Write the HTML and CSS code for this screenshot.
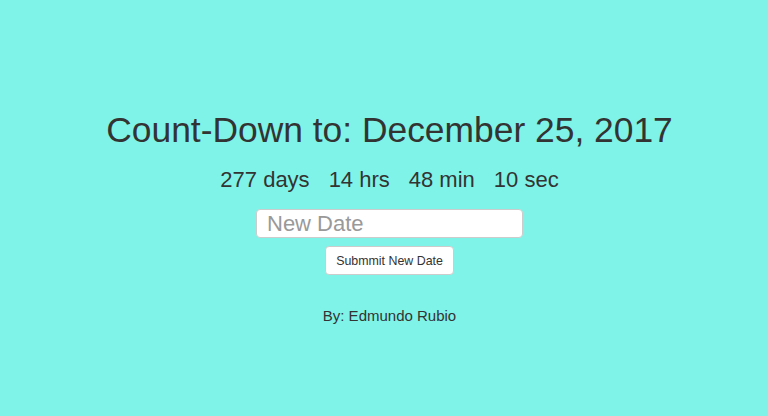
FILE: index.html
```html
<!DOCTYPE html>
<html>
<head>
<meta charset="utf-8">
<link rel="stylesheet" href="styles.css">
</head>
<body>
<main class="page">
  <h1 class="title">Count-Down to: December 25, 2017</h1>
  <div class="timer">
    <span class="unit">277 days</span>
    <span class="unit">14 hrs</span>
    <span class="unit">48 min</span>
    <span class="unit">10 sec</span>
  </div>
  <form class="date-form">
    <input class="date-input" type="text" placeholder="New Date">
    <button class="btn" type="button">Submmit New Date</button>
  </form>
  <p class="byline">By: Edmundo Rubio</p>
</main>
</body>
</html>
```
FILE: styles.css
```css
html, body {
  margin: 0;
  padding: 0;
  height: 100%;
}
body {
  background: #7ff3e7;
  color: #333;
  font-family: "Liberation Sans", Arial, sans-serif;
}
.page {
  display: flex;
  flex-direction: column;
  align-items: center;
  padding: 110px 0 0 11px;
}
.title {
  margin: 0;
  font-size: 35.4px;
  font-weight: normal;
  line-height: 40px;
}
.timer {
  display: flex;
  gap: 19px;
  margin-top: 17px;
  font-size: 22px;
  line-height: 26px;
}
.date-form {
  display: flex;
  flex-direction: column;
  align-items: center;
  margin-top: 16px;
}
.date-input {
  box-sizing: border-box;
  width: 267px;
  height: 29px;
  padding: 2px 10px;
  border: 1px solid #ccc;
  border-radius: 4px;
  background: #fff;
  font-family: inherit;
  font-size: 22px;
  color: #555;
}
.date-input::placeholder {
  color: #999;
}
.btn {
  box-sizing: border-box;
  margin-top: 8px;
  width: 129px;
  height: 29px;
  border: 1px solid #ccc;
  border-radius: 4px;
  background: #fff;
  color: #333;
  font-family: inherit;
  font-size: 12.4px;
}
.byline {
  margin: 31px 0 0;
  font-size: 15px;
  line-height: 20px;
}
```
